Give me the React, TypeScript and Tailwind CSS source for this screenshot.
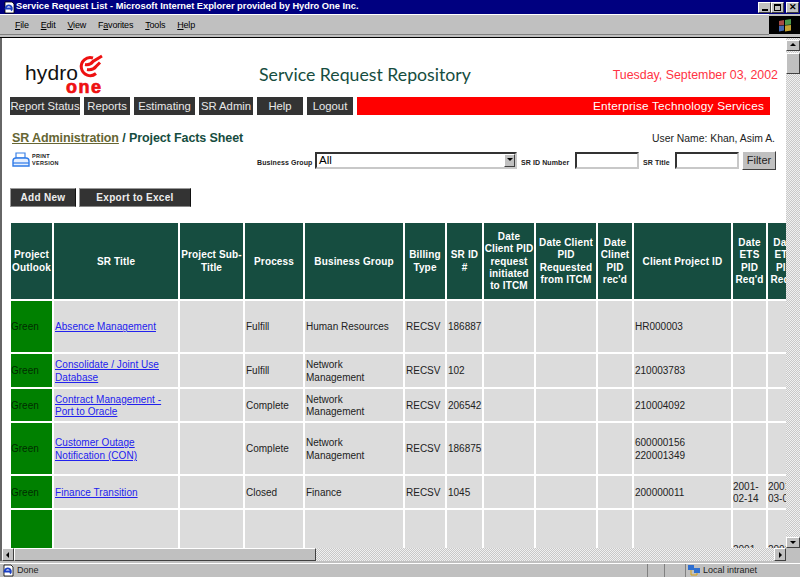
const menus = [
  { first: "F", rest: "ile" },
  { first: "E", rest: "dit" },
  { first: "V", rest: "iew" },
  { before: "F", first: "a", rest: "vorites" },
  { first: "T", rest: "ools" },
  { first: "H", rest: "elp" },
];

const navItems = [
  { label: "Report Status", width: "w-[70px]" },
  { label: "Reports", width: "w-[46px]" },
  { label: "Estimating", width: "w-[61px]" },
  { label: "SR Admin", width: "w-[54px]" },
  { label: "Help", width: "w-[46px]" },
  { label: "Logout", width: "w-[46px]" },
];

const columns = [
  { key: "outlook", width: "w-[41px]", head: ["Project", "Outlook"] },
  { key: "title", width: "w-[124px]", head: ["SR Title"] },
  { key: "sub", width: "w-[63px]", head: ["Project Sub-", "Title"] },
  { key: "process", width: "w-[58px]", head: ["Process"] },
  { key: "group", width: "w-[98px]", head: ["Business Group"] },
  { key: "billing", width: "w-[40px]", head: ["Billing", "Type"] },
  { key: "id", width: "w-[35px]", head: ["SR ID", "#"] },
  { key: "init", width: "w-[50px]", head: ["Date", "Client PID", "request", "initiated", "to ITCM"] },
  { key: "req", width: "w-[60px]", head: ["Date Client", "PID", "Requested", "from ITCM"] },
  { key: "rec", width: "w-[34px]", head: ["Date", "Clinet", "PID", "rec'd"] },
  { key: "client", width: "w-[97px]", head: ["Client Project ID"] },
  { key: "ets", width: "w-[33px]", head: ["Date", "ETS", "PID", "Req'd"] },
  { key: "ets2", width: "w-[33px]", head: ["Date", "ETS", "PID", "Req'd"] },
];

interface Row {
  height: string;
  title?: string[];
  process?: string;
  group?: string[];
  billing?: string;
  id?: string;
  client?: string[];
  ets?: string[];
  ets2?: string[];
  outlook?: string;
}

const rows: Row[] = [
  { height: "h-[51px]", outlook: "Green", title: ["Absence Management"], process: "Fulfill", group: ["Human Resources"], billing: "RECSV", id: "186887", client: ["HR000003"] },
  { height: "h-[33px]", outlook: "Green", title: ["Consolidate / Joint Use", "Database"], process: "Fulfill", group: ["Network", "Management"], billing: "RECSV", id: "102", client: ["210003783"] },
  { height: "h-[32px]", outlook: "Green", title: ["Contract Management -", "Port to Oracle"], process: "Complete", group: ["Network", "Management"], billing: "RECSV", id: "206542", client: ["210004092"] },
  { height: "h-[51px]", outlook: "Green", title: ["Customer Outage", "Notification (CON)"], process: "Complete", group: ["Network", "Management"], billing: "RECSV", id: "186875", client: ["600000156", "220001349"] },
  { height: "h-[32px]", outlook: "Green", title: ["Finance Transition"], process: "Closed", group: ["Finance"], billing: "RECSV", id: "1045", client: ["200000011"], ets: ["2001-", "02-14"], ets2: ["2001-", "03-01"] },
  { height: "h-[90px]", ets: ["2001-", "03-01"], ets2: ["2001-", "03-15"] },
];

const raised = "border border-t-white border-l-white border-r-[#404040] border-b-[#404040] bg-[#c0c0c0]";
const sunken = "border-2 border-t-[#333333] border-l-[#333333] border-r-[#c8c8c8] border-b-[#c8c8c8] bg-white";
const dither = "bg-[repeating-conic-gradient(#c8c8c8_0_25%,#f0f0f0_0_50%)] bg-[length:2px_2px]";

function Lines({ lines }: { lines?: string[] }) {
  if (!lines) return null;
  return (
    <>
      {lines.map((line) => (
        <div key={line}>{line}</div>
      ))}
    </>
  );
}

function WindowButton({ children, gap }: { children: React.ReactNode; gap?: boolean }) {
  return (
    <div className={`${raised} w-[13px] h-[11px] flex items-center justify-center ${gap ? "ml-[2px]" : ""}`}>
      {children}
    </div>
  );
}

function Arrow({ dir }: { dir: "up" | "down" | "left" | "right" }) {
  const points = {
    up: "4,1 7,4 1,4",
    down: "1,2 7,2 4,5",
    left: "5,1 5,7 2,4",
    right: "3,1 3,7 6,4",
  };
  return (
    <svg width="8" height="8" viewBox="0 0 8 8">
      <polygon points={points[dir]} fill="#000" />
    </svg>
  );
}

function IeIcon() {
  return (
    <svg width="14" height="13" viewBox="0 0 14 13">
      <path d="M3 1h7l2 2v9H3z" fill="#fff" stroke="#000" strokeWidth="0.8" />
      <path d="M9.500 7.500H3.500a3.200 3.200 0 1 1 5.600 2.200" fill="none" stroke="#1a3fc4" strokeWidth="1.800" />
    </svg>
  );
}

function Logo() {
  return (
    <svg width="90" height="46" viewBox="0 0 90 46" className="ml-[10px] mt-[6px] shrink-0">
      <text x="5" y="32" fontFamily="'Liberation Sans', sans-serif" fontSize="21" fill="#111" textLength="53">
        hydro
      </text>
      <text x="46" y="45" fontFamily="'Liberation Sans', sans-serif" fontSize="18" fontWeight="700" fill="#ee1111" stroke="#ee1111" strokeWidth="0.7" textLength="35">
        one
      </text>
      <g transform="translate(0 1.500)">
        <path d="M73 8.500 A9 9 0 1 0 76 24" fill="none" stroke="#ee1111" strokeWidth="3" />
        <path d="M65 15 Q70 16 73 12 L82 6.500" fill="none" stroke="#ee1111" strokeWidth="3" />
        <path d="M67 20 Q73 21 76 17 L80 13" fill="none" stroke="#ee1111" strokeWidth="3" />
      </g>
    </svg>
  );
}

function PrintIcon() {
  return (
    <svg width="18" height="16" viewBox="0 0 18 16">
      <path d="M4 1h9v5H4z" fill="#fff" stroke="#3b82e6" strokeWidth="1.2" />
      <path d="M1 9q0-3 3-3h10q3 0 3 3v5H1z" fill="#e6f0ff" stroke="#2f7be8" strokeWidth="1.4" />
      <path d="M1 11h16" stroke="#2f7be8" strokeWidth="1.2" />
    </svg>
  );
}

export default function App() {
  return (
    <div className="w-[800px] h-[577px] overflow-hidden flex flex-col bg-[#c0c0c0] font-['Liberation_Sans',Arial,sans-serif] text-black">
      {/* window title */}
      <div className="h-[14px] shrink-0 bg-[#000080] flex items-center pl-[2px] pr-[1px]">
        <IeIcon />
        <span className="text-[9.300px] font-bold text-white whitespace-nowrap">
          Service Request List - Microsoft Internet Explorer provided by Hydro One Inc.
        </span>
        <div className="ml-auto flex">
          <WindowButton>
            <div className="w-[6px] h-[2px] bg-black mt-[5px]" />
          </WindowButton>
          <WindowButton>
            <div className="w-[7px] h-[7px] border border-black border-t-2 bg-[#c0c0c0]" />
          </WindowButton>
          <WindowButton gap>
            <span className="text-[9px] font-bold leading-none">✕</span>
          </WindowButton>
        </div>
      </div>

      {/* menu bar */}
      <div className="h-[24px] shrink-0 flex border-b border-b-black">
        <div className="flex-1 flex items-center gap-[12px] pl-[15px] pt-[2px] text-[9px] tracking-[-0.2px] border-t border-t-white border-b border-b-[#808080] mb-[2px]">
          {menus.map((m) => (
            <span key={m.first + m.rest}>
              {m.before}
              <span className="underline">{m.first}</span>
              {m.rest}
            </span>
          ))}
        </div>
        <div className="w-[31px] h-[18px] mt-[2px] bg-black flex items-center justify-center">
          <svg width="14" height="13" viewBox="0 0 14 13">
            <path d="M1 2l5-1v5l-5 .5z" fill="#a84a44" />
            <path d="M7 1l6-1v5.500l-6 .5z" fill="#4c9a4c" />
            <path d="M1 7l5-.5v5l-5 1z" fill="#4468b0" />
            <path d="M7 6.500l6-.5v5.500l-6 1z" fill="#c4a433" />
          </svg>
        </div>
      </div>

      <div className="flex-1 min-h-0 flex">
        <div className="flex-1 min-w-0 overflow-hidden bg-white border-l-2 border-l-[#666666] pl-[8px]">
          {/* masthead */}
          <div className="h-[59px] pr-[8px] flex items-center">
            <Logo />
            <h1 className="ml-[149px] mt-[16px] font-['Lato',sans-serif] text-[17.700px] text-[#164d40] whitespace-nowrap">
              Service Request Repository
            </h1>
            <div className="ml-auto mt-[16px] text-[12.400px] text-[#ff3344] whitespace-nowrap">
              Tuesday, September 03, 2002
            </div>
          </div>

          {/* nav */}
          <div className="flex gap-[4px] h-[18px]">
            {navItems.map((item) => (
              <div key={item.label} className={`${item.width} bg-[#333333] text-[#e8e8e8] text-[11.300px] flex items-center justify-center whitespace-nowrap pt-[1px]`}>
                {item.label}
              </div>
            ))}
            <div className="w-[413px] bg-[#ff0000] text-white text-[11.800px] tracking-[0.2px] flex items-center justify-end pr-[6px] pt-[1px]">
              Enterprise Technology Services
            </div>
          </div>

          {/* breadcrumb */}
          <div className="mt-[14px] pr-[11px] flex items-center justify-between">
            <div className="pl-[2px] text-[12.500px] font-bold tracking-[-0.1px] text-[#164d40] whitespace-nowrap">
              <span className="text-[#666633] underline">SR Administration</span> / Project Facts Sheet
            </div>
            <div className="text-[10.400px] text-[#222222] whitespace-nowrap">User Name: Khan, Asim A.</div>
          </div>

          {/* print + filters */}
          <div className="mt-[3px] h-[19px] flex items-center">
            <div className="pl-[2px] flex items-center gap-[2px] w-[247px] shrink-0">
              <PrintIcon />
              <div className="text-[5.500px] leading-[7px] font-bold tracking-[0.3px] text-[#222222]">
                <div>PRINT</div>
                <div>VERSION</div>
              </div>
            </div>
            <div className="w-[55px] shrink-0 text-[7px] font-bold tracking-[0.1px] text-[#222222] whitespace-nowrap mt-[6px]">Business Group</div>
            <div className={`${sunken} ml-[3px] w-[202px] shrink-0 h-[17px] flex items-center text-[11.500px] pl-[2px]`}>
              All
              <div className={`${raised} ml-auto w-[11px] h-[13px] flex items-center justify-center`}>
                <Arrow dir="down" />
              </div>
            </div>
            <div className="ml-[4px] w-[52px] shrink-0 text-[7px] font-bold tracking-[0.1px] text-[#222222] whitespace-nowrap mt-[6px]">SR ID Number</div>
            <input className={`${sunken} ml-[2px] w-[64px] shrink-0 h-[17px]`} />
            <div className="ml-[4px] w-[29px] shrink-0 text-[7px] font-bold tracking-[0.1px] text-[#222222] whitespace-nowrap mt-[6px]">SR Title</div>
            <input className={`${sunken} ml-[3px] w-[64px] shrink-0 h-[17px]`} />
            <button className={`${raised} ml-[3px] w-[34px] shrink-0 h-[19px] text-[11px] text-[#222222]`}>Filter</button>
          </div>

          {/* actions */}
          <div className="mt-[18px] h-[19px] flex gap-[3px]">
            <button className="w-[66px] bg-[#333333] border border-t-[#999999] border-l-[#999999] border-r-[#111111] border-b-[#888888] text-[10px] font-bold tracking-[0.3px] text-[#eeeeee]">
              Add New
            </button>
            <button className="w-[112px] bg-[#333333] border border-t-[#999999] border-l-[#999999] border-r-[#111111] border-b-[#888888] text-[10px] font-bold tracking-[0.3px] text-[#eeeeee]">
              Export to Excel
            </button>
          </div>

          {/* table */}
          <table className="mt-[14px] -ml-[1px] table-fixed border-separate border-spacing-[2px] w-[777px]">
            <thead>
              <tr className="h-[76px]">
                {columns.map((c) => (
                  <th key={c.key} className={`${c.width} p-0 pt-[2px] bg-[#164d40] text-white text-[10px] leading-[12.400px] font-bold tracking-[0.15px] text-center align-middle whitespace-nowrap overflow-hidden`}>
                    <Lines lines={c.head} />
                  </th>
                ))}
              </tr>
            </thead>
            <tbody className="text-[10px] leading-[12.700px] text-[#222222]">
              {rows.map((row, i) => (
                <tr key={i} className={row.height}>
                  <td className="p-0 pt-[3px] bg-[#008000] text-black/70 align-middle">{row.outlook}</td>
                  <td className="px-[1px] pt-[3px] pb-0 bg-[#dcdcdc] align-middle text-[#2222ee] underline tracking-[0.05px] whitespace-nowrap overflow-hidden">
                    <Lines lines={row.title} />
                  </td>
                  <td className="p-0 bg-[#dcdcdc]" />
                  <td className="px-[1px] pt-[3px] pb-0 bg-[#dcdcdc] align-middle">{row.process}</td>
                  <td className="px-[1px] pt-[3px] pb-0 bg-[#dcdcdc] align-middle">
                    <Lines lines={row.group} />
                  </td>
                  <td className="px-[1px] pt-[3px] pb-0 bg-[#dcdcdc] align-middle">{row.billing}</td>
                  <td className="px-[1px] pt-[3px] pb-0 bg-[#dcdcdc] align-middle">{row.id}</td>
                  <td className="p-0 bg-[#dcdcdc]" />
                  <td className="p-0 bg-[#dcdcdc]" />
                  <td className="p-0 bg-[#dcdcdc]" />
                  <td className="px-[1px] pt-[3px] pb-0 bg-[#dcdcdc] align-middle">
                    <Lines lines={row.client} />
                  </td>
                  <td className="p-0 pt-[3px] bg-[#dcdcdc] align-middle overflow-hidden">
                    <Lines lines={row.ets} />
                  </td>
                  <td className="p-0 pt-[3px] bg-[#dcdcdc] align-middle overflow-hidden">
                    <Lines lines={row.ets2} />
                  </td>
                </tr>
              ))}
            </tbody>
          </table>
        </div>

        {/* vertical scrollbar */}
        <div className={`w-[14px] shrink-0 flex flex-col pt-[2px] ${dither}`}>
          <div className={`${raised} h-[11px] flex items-center justify-center`}>
            <Arrow dir="up" />
          </div>
          <div className={`${raised} h-[21px] mt-[2px]`} />
          <div className={`${raised} h-[11px] mt-auto flex items-center justify-center`}>
            <Arrow dir="down" />
          </div>
        </div>
      </div>

      {/* horizontal scrollbar */}
      <div className="h-[13px] shrink-0 flex">
        <div className="w-[2px] bg-[#666666]" />
        <div className={`w-[784px] flex ${dither}`}>
          <div className={`${raised} w-[12px] flex items-center justify-center`}>
            <Arrow dir="left" />
          </div>
          <div className={`${raised} w-[302px]`} />
          <div className={`${raised} w-[12px] ml-auto flex items-center justify-center`}>
            <Arrow dir="right" />
          </div>
        </div>
      </div>

      {/* status bar */}
      <div className="h-[14px] shrink-0 mt-[2px] border-t border-t-white flex items-center text-[9px] text-[#222222]">
        <div className="w-[647px] flex items-center gap-[2px] pl-[1px]">
          <IeIcon />
          Done
        </div>
        <div className="w-[17px] h-full border-l border-l-[#808080]" />
        <div className="w-[21px] h-full border-l border-l-[#808080]" />
        <div className="flex-1 h-full border-l border-l-[#808080] flex items-center gap-[2px] pl-[1px]">
          <svg width="14" height="13" viewBox="0 0 14 13">
            <rect x="1" y="1" width="6" height="5" fill="#2f6fd0" />
            <rect x="7" y="4" width="6" height="5" fill="#2f6fd0" />
            <path d="M4 6v5h6M10 9v2" stroke="#d4a017" strokeWidth="1" fill="none" />
          </svg>
          Local intranet
        </div>
      </div>
    </div>
  );
}
